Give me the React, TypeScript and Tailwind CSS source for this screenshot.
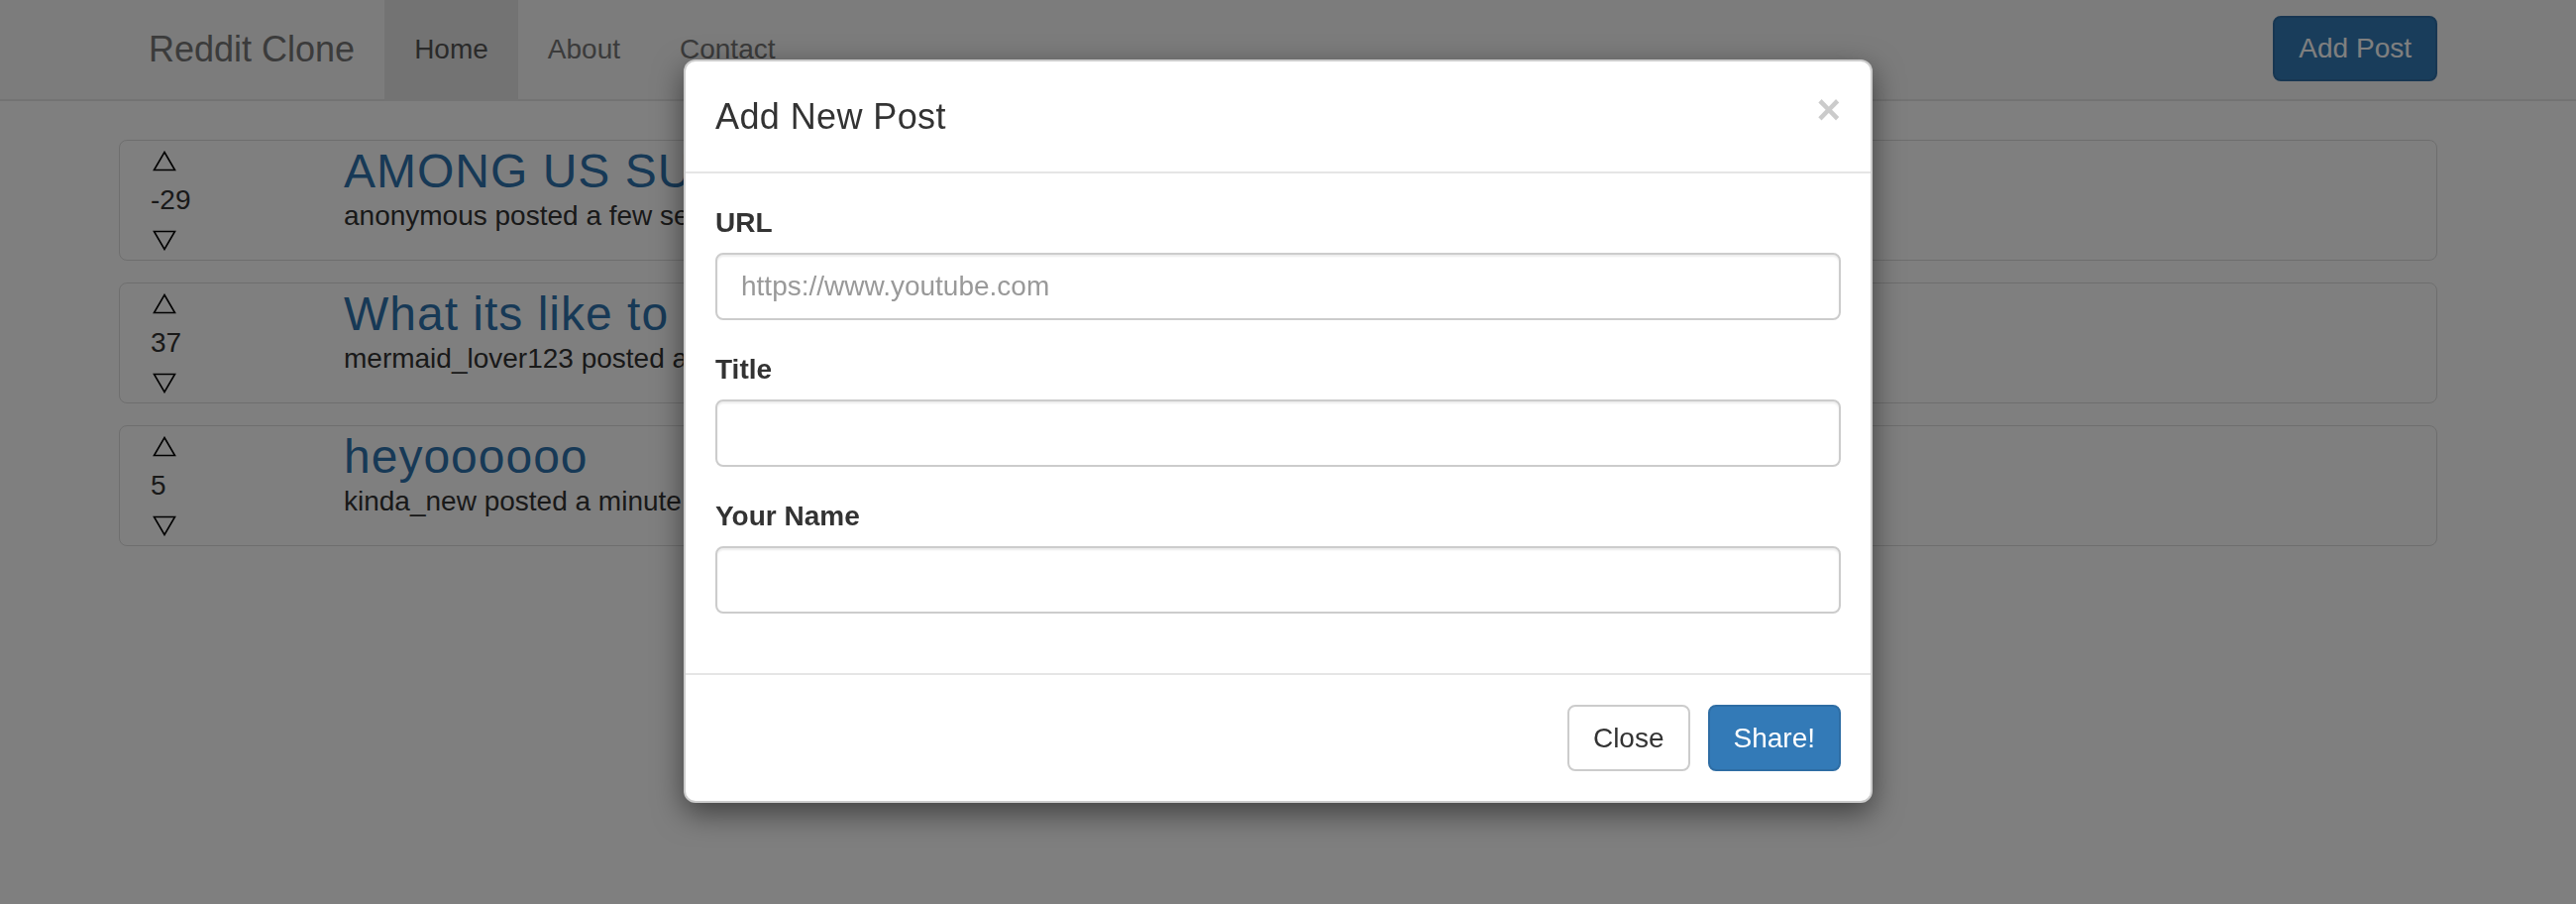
type Post = {
  votes: number;
  title: string;
  author: string;
  time: string;
};

const posts: Post[] = [
  { votes: -29, title: "AMONG US SUCKS", author: "anonymous", time: "a few seconds ago" },
  { votes: 37, title: "What its like to be a mermaid", author: "mermaid_lover123", time: "a minute ago" },
  { votes: 5, title: "heyoooooo", author: "kinda_new", time: "a minute ago" },
];

function Arrow({ down }: { down?: boolean }) {
  return (
    <svg width="24" height="21" viewBox="0 0 24 21" className="mt-[10px] ml-[2px]">
      <polygon
        points={down ? "1.5,1.5 22.5,1.5 12,19.5" : "12,1.5 22.5,19.5 1.5,19.5"}
        fill="none"
        stroke="#000"
        strokeWidth="1.6"
        strokeLinejoin="miter"
      />
    </svg>
  );
}

function PostCard({ votes, title, author, time }: Post) {
  return (
    <div className="flex h-[122px] border border-[#ddd] rounded-[8px] mb-[22px] bg-white">
      {/* 투표 */}
      <div className="w-[195px] pl-[31px] flex flex-col">
        <div className="h-[40px]"><Arrow /></div>
        <div className="h-[40px] leading-[40px]">{votes}</div>
        <div className="h-[40px]"><Arrow down /></div>
      </div>
      {/* 제목 */}
      <div className="pl-[31px]">
        <h3 className="mt-[5px] text-[48px] leading-[51px] tracking-[1px] text-[#2f73ad]">{title}</h3>
        <p className="leading-[40px]">{author} posted {time}</p>
      </div>
    </div>
  );
}

function Field({ label, placeholder }: { label: string; placeholder?: string }) {
  return (
    <div className="mb-[30px]">
      <label className="block font-bold leading-[40px] mb-[10px]">{label}</label>
      <input
        className="block w-full h-[68px] px-[24px] border-2 border-[#ccc] rounded-[8px] shadow-[inset_0_2px_2px_rgba(0,0,0,0.075)] text-[28px] text-[#555] placeholder:text-[#999] outline-none"
        placeholder={placeholder}
      />
    </div>
  );
}

export default function App() {
  return (
    <div className="relative min-h-[912px] bg-white text-[#333] text-[28px] leading-[40px] font-['Liberation_Sans',Arial,sans-serif]">
      {/* 네비게이션 */}
      <nav className="h-[102px] bg-[#f8f8f8] border-b-2 border-[#e7e7e7]">
        <div className="ml-[120px] w-[2340px] flex items-start">
          <a className="block px-[30px] py-[30px] text-[36px] leading-[40px] text-[#777]">Reddit Clone</a>
          <ul className="flex">
            <li><a className="block px-[30px] py-[30px] leading-[40px] bg-[#e7e7e7] text-[#555]">Home</a></li>
            <li><a className="block px-[30px] py-[30px] leading-[40px] text-[#777]">About</a></li>
            <li><a className="block px-[30px] py-[30px] leading-[40px] text-[#777]">Contact</a></li>
          </ul>
          <button className="ml-auto mt-[16px] h-[66px] px-[24px] rounded-[8px] border-2 border-[#2e6da4] bg-[#337ab7] text-white leading-[40px]">
            Add Post
          </button>
        </div>
      </nav>

      {/* 게시글 목록 */}
      <div className="ml-[120px] w-[2340px] mt-[39px]">
        {posts.map((p, i) => (
          <PostCard key={i} {...p} />
        ))}
      </div>

      {/* 모달 배경 */}
      <div className="fixed inset-0 bg-black/50" />

      {/* 모달 */}
      <div className="absolute left-[690px] top-[60px] w-[1200px] bg-white border-2 border-black/20 rounded-[12px] shadow-[0_10px_30px_rgba(0,0,0,0.5)]">
        <div className="flex items-start justify-between p-[30px] border-b-2 border-[#e5e5e5]">
          <h4 className="text-[36px] leading-[51px] tracking-[0.4px]">Add New Post</h4>
          <button className="mt-[-2px] text-[42px] leading-[42px] font-bold text-black opacity-20">×</button>
        </div>
        <div className="p-[30px]">
          <Field label="URL" placeholder="https://www.youtube.com" />
          <Field label="Title" />
          <Field label="Your Name" />
        </div>
        <div className="flex justify-end gap-[18px] p-[30px] border-t-2 border-[#e5e5e5]">
          <button className="h-[67px] px-[24px] rounded-[8px] border-2 border-[#ccc] bg-white text-[#333] leading-[40px]">Close</button>
          <button className="h-[67px] px-[24px] rounded-[8px] border-2 border-[#2e6da4] bg-[#337ab7] text-white leading-[40px]">Share!</button>
        </div>
      </div>
    </div>
  );
}
